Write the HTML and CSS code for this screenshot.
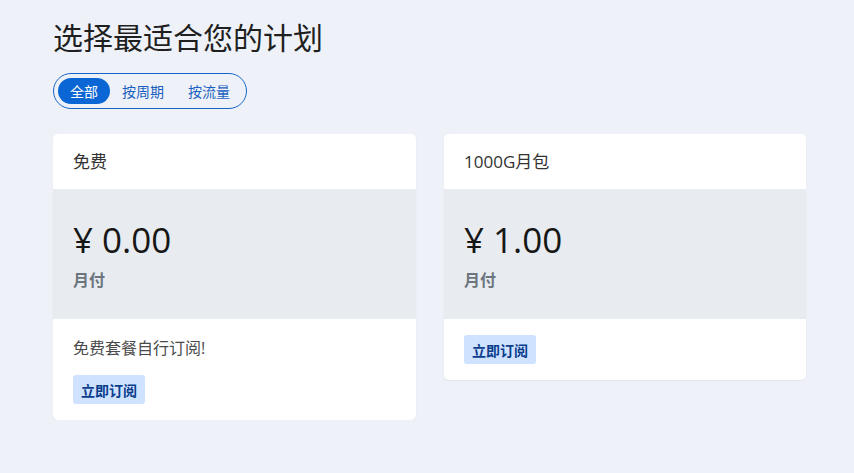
FILE: index.html
```html
<!DOCTYPE html>
<html lang="zh-CN">
<head>
    <meta charset="UTF-8">
    <title>选择计划</title>
    <link rel="stylesheet" href="styles.css">
</head>
<body>
    <div class="page">
        <h1 class="title">选择最适合您的计划</h1>

        <div class="tabs">
            <button class="tab active">全部</button>
            <button class="tab">按周期</button>
            <button class="tab">按流量</button>
        </div>

        <div class="plans">
            <div class="plan">
                <div class="plan-head">免费</div>
                <div class="plan-price">
                    <div class="price">¥ 0.00</div>
                    <div class="period">月付</div>
                </div>
                <div class="plan-body">
                    <p class="desc">免费套餐自行订阅!</p>
                    <button class="subscribe">立即订阅</button>
                </div>
            </div>

            <div class="plan">
                <div class="plan-head">1000G月包</div>
                <div class="plan-price">
                    <div class="price">¥ 1.00</div>
                    <div class="period">月付</div>
                </div>
                <div class="plan-body">
                    <button class="subscribe">立即订阅</button>
                </div>
            </div>
        </div>
    </div>
</body>
</html>
```

FILE: styles.css
```css
body {
    margin: 0;
    background: #eef2f8;
    font-family: 'Open Sans', 'Noto Sans CJK SC', sans-serif;
    color: #222;
}
.page {
    padding: 18px 48px 0 53px;
}
.title {
    font-size: 30px;
    font-weight: 400;
    margin: 0 0 15px;
    line-height: 40px;
    color: #1f1f1f;
}
.tabs {
    display: inline-flex;
    padding: 4px;
    border: 1px solid #1565c8;
    border-radius: 18px;
    margin-bottom: 25px;
}
.tab {
    font-family: inherit;
    font-size: 14px;
    background: none;
    border: none;
    color: #1a5fc0;
    padding: 0 12px;
    height: 26px;
    border-radius: 13px;
    cursor: pointer;
}
.tab.active {
    background: #0a66d4;
    color: white;
}
.plans {
    display: grid;
    grid-template-columns: 363px 362px;
    gap: 28px;
    align-items: start;
}
.plan {
    background: white;
    border-radius: 5px;
    overflow: hidden;
    box-shadow: 0 1px 2px rgba(0,0,0,0.06);
}
.plan-head {
    height: 55px;
    line-height: 55px;
    padding: 0 20px;
    font-size: 17px;
    color: #333;
}
.plan-price {
    background: #e8ebef;
    height: 130px;
    padding: 28px 20px 0;
    box-sizing: border-box;
}
.price {
    font-size: 35px;
    line-height: 46px;
    color: #161616;
}
.period {
    font-size: 16px;
    font-weight: bold;
    color: #6c757d;
    margin-top: 4px;
}
.plan-body {
    padding: 16px 20px;
}
.desc {
    margin: 1px 0 15px;
    font-size: 16px;
    line-height: 24px;
    color: #4a4a4a;
}
.subscribe {
    font-family: inherit;
    font-size: 14px;
    font-weight: bold;
    background: #cfe2ff;
    color: #0a3d8c;
    border: none;
    border-radius: 3px;
    height: 29px;
    padding: 0 8px;
    cursor: pointer;
}
```
